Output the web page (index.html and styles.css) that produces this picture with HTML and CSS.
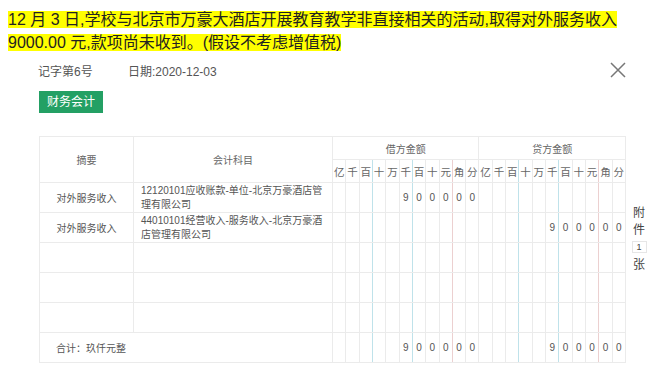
FILE: index.html
```html
<!DOCTYPE html>
<html lang="zh">
<head>
<meta charset="utf-8">
<link rel="stylesheet" href="styles.css">
</head>
<body>
<p class="q"><span class="hl">12 月 3 日,学校与北京市万豪大酒店开展教育教学非直接相关的活动,取得对外服务收入 9000.00 元,款项尚未收到。(假设不考虑增值税)</span></p>
<div class="dlg">
  <div class="head">
    <span class="num">记字第6号</span>
    <span class="date">日期:2020-12-03</span>
    <span class="close"><svg width="16" height="16" viewBox="0 0 16 16"><path d="M1 1L15 15M15 1L1 15" stroke="#777" stroke-width="1.5" fill="none"/></svg></span>
  </div>
  <div class="tag">财务会计</div>
  <div class="body">
    <table class="vt">
      <colgroup><col class="w1"><col class="w2"><col span="22"></colgroup>
      <thead>
        <tr>
          <th rowspan="2">摘要</th>
          <th rowspan="2">会计科目</th>
          <th colspan="11" class="sec">借方金额</th>
          <th colspan="11">贷方金额</th>
        </tr>
        <tr class="units">
          <th>亿</th><th>千</th><th class="c">百</th><th>十</th><th>万</th><th class="c">千</th><th>百</th><th>十</th><th class="r">元</th><th>角</th><th>分</th>
          <th>亿</th><th>千</th><th class="c">百</th><th>十</th><th>万</th><th class="c">千</th><th>百</th><th>十</th><th class="r">元</th><th>角</th><th>分</th>
        </tr>
      </thead>
      <tbody>
        <tr>
          <td>对外服务收入</td>
          <td class="km">12120101应收账款-单位-北京万豪酒店管理有限公司</td>
          <td></td><td></td><td class="c"></td><td></td><td></td><td class="c">9</td><td>0</td><td>0</td><td class="r">0</td><td>0</td><td>0</td>
          <td></td><td></td><td class="c"></td><td></td><td></td><td class="c"></td><td></td><td></td><td class="r"></td><td></td><td></td>
        </tr>
        <tr>
          <td>对外服务收入</td>
          <td class="km">44010101经营收入-服务收入-北京万豪酒店管理有限公司</td>
          <td></td><td></td><td class="c"></td><td></td><td></td><td class="c"></td><td></td><td></td><td class="r"></td><td></td><td></td>
          <td></td><td></td><td class="c"></td><td></td><td></td><td class="c">9</td><td>0</td><td>0</td><td class="r">0</td><td>0</td><td>0</td>
        </tr>
        <tr>
          <td></td><td></td>
          <td></td><td></td><td class="c"></td><td></td><td></td><td class="c"></td><td></td><td></td><td class="r"></td><td></td><td></td>
          <td></td><td></td><td class="c"></td><td></td><td></td><td class="c"></td><td></td><td></td><td class="r"></td><td></td><td></td>
        </tr>
        <tr>
          <td></td><td></td>
          <td></td><td></td><td class="c"></td><td></td><td></td><td class="c"></td><td></td><td></td><td class="r"></td><td></td><td></td>
          <td></td><td></td><td class="c"></td><td></td><td></td><td class="c"></td><td></td><td></td><td class="r"></td><td></td><td></td>
        </tr>
        <tr>
          <td></td><td></td>
          <td></td><td></td><td class="c"></td><td></td><td></td><td class="c"></td><td></td><td></td><td class="r"></td><td></td><td></td>
          <td></td><td></td><td class="c"></td><td></td><td></td><td class="c"></td><td></td><td></td><td class="r"></td><td></td><td></td>
        </tr>
        <tr class="total">
          <td colspan="2" class="sum">合计：玖仟元整</td>
          <td></td><td></td><td class="c"></td><td></td><td></td><td class="c">9</td><td>0</td><td>0</td><td class="r">0</td><td>0</td><td>0</td>
          <td></td><td></td><td class="c"></td><td></td><td></td><td class="c">9</td><td>0</td><td>0</td><td class="r">0</td><td>0</td><td>0</td>
        </tr>
      </tbody>
    </table>
    <div class="side">
      <span>附</span>
      <span>件</span>
      <span class="cnt">1</span>
      <span>张</span>
    </div>
  </div>
</div>
</body>
</html>
```

FILE: styles.css
```css
body {
  margin: 8px;
  font-family: "Liberation Sans", "Noto Sans CJK SC", sans-serif;
  color: #333;
  background: #fff;
}

.q {
  margin: 0;
  font-size: 16px;
  line-height: 23px;
  color: #222;
  width: 630px;
}

.hl {
  background: #ffff00;
}

.dlg {
  margin: 7px 0 0 30px;
  width: 618px;
}

.head {
  display: flex;
  align-items: center;
  height: 18px;
  font-size: 12px;
  color: #555;
  width: 588px;
}

.num {
  width: 90px;
}

.close {
  margin-left: auto;
  display: flex;
}

.tag {
  display: inline-block;
  margin: 12px 0 0 1px;
  height: 22px;
  line-height: 22px;
  padding: 0 8px;
  background: #23a064;
  color: #fff;
  font-size: 12px;
}

.body {
  display: flex;
  margin-top: 23px;
  margin-left: 1px;
}

.vt {
  border-collapse: collapse;
  table-layout: fixed;
  width: 587px;
  font-size: 10px;
  color: #555;
}

.w1 {
  width: 94px;
}

.w2 {
  width: 199px;
}

.vt th,
.vt td {
  border: 1px solid #ebebeb;
  padding: 0;
  text-align: center;
  font-weight: normal;
}

.vt thead tr {
  height: 23px;
}

.vt thead th {
  color: #666;
}

.units th {
  font-size: 10.5px;
}

.vt tbody tr {
  height: 30px;
}

.vt .c {
  border-right-color: #bfe2ea;
}

.vt .r {
  border-right-color: #ecd0d0;
}

.vt td.km {
  text-align: left;
  padding-left: 7px;
  padding-right: 6px;
  line-height: 14px;
}

.vt td.sum {
  text-align: left;
  padding-left: 16px;
}

.side {
  display: flex;
  flex-direction: column;
  align-items: center;
  width: 16px;
  margin-left: 5px;
  padding-top: 69px;
  font-size: 12px;
  color: #444;
  line-height: 17px;
}

.cnt {
  font-size: 9px;
  line-height: 10px;
  width: 13px;
  text-align: center;
  border: 1px solid #e6e6e6;
  margin: 2px 0 4px;
}
```
